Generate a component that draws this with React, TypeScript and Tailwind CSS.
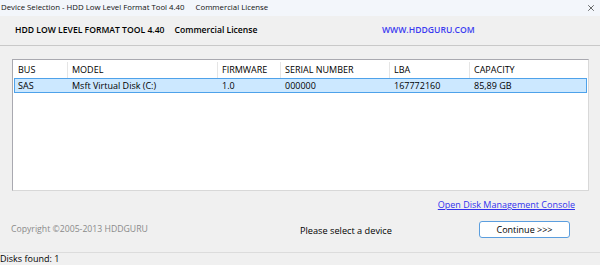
import { X } from "lucide-react"

const font = { fontFamily: '"Open Sans", "Noto Sans", sans-serif' }

const cols = [
  { key: "bus", label: "BUS", w: "w-[54px]" },
  { key: "model", label: "MODEL", w: "w-[150px]" },
  { key: "fw", label: "FIRMWARE", w: "w-[63px]" },
  { key: "sn", label: "SERIAL NUMBER", w: "w-[109px]" },
  { key: "lba", label: "LBA", w: "w-[80px]" },
  { key: "cap", label: "CAPACITY", w: "flex-1" },
]

const disks = [
  { bus: "SAS", model: "Msft Virtual Disk (C:)", fw: "1.0", sn: "000000", lba: "167772160", cap: "85,89 GB" },
]

export default function App() {
  return (
    <div className="w-[600px] h-[265px] bg-[#f0f0f0] text-black flex flex-col overflow-hidden text-[9px]" style={font}>
      {/* title bar */}
      <div className="h-[16px] bg-[#f3f6fb] flex items-center justify-between pl-[1px] pr-[4px] text-[7.8px] text-[#111]">
        <div className="flex">
          <span>Device Selection - HDD Low Level Format Tool 4.40</span>
          <span className="ml-[11px]">Commercial License</span>
        </div>
        <X className="w-[10px] h-[10px]" strokeWidth={1.5} />
      </div>

      {/* header */}
      <div className="h-[30px] flex items-center pl-[15px] border-b border-[#c9c9c9] text-[8.6px] font-semibold">
        <div className="flex w-[367px]">
          <span>HDD LOW LEVEL FORMAT TOOL 4.40</span>
          <span className="ml-[10px]">Commercial License</span>
        </div>
        <span className="text-[#3b3bf0]">WWW.HDDGURU.COM</span>
      </div>

      {/* device list */}
      <div className="mt-[13px] ml-[12px] w-[577px] h-[132px] bg-white border border-[#a9a9b0] border-r-[#d8d8d8] border-b-[#d8d8d8] p-[1px]">
        <div className="flex h-[17px] items-center pt-[1px]">
          {cols.map((c) => (
            <div key={c.key} className={`${c.w} h-full flex items-center pl-[4px] border-r border-[#e5e5e5] last:border-r-0`}>
              {c.label}
            </div>
          ))}
        </div>
        {disks.map((d) => (
          <div key={d.sn} className="flex h-[15px] items-center bg-[#cce8ff] border border-[#4ea2ea]">
            {cols.map((c) => (
              <div key={c.key} className={`${c.w} pl-[3px]`}>
                {d[c.key as keyof typeof d]}
              </div>
            ))}
          </div>
        ))}
      </div>

      {/* link */}
      <div className="h-[26px] flex items-center justify-end pr-[25px] mt-[1px]">
        <a className="text-[#3333ee] underline text-[9px]">Open Disk Management Console</a>
      </div>

      {/* footer actions */}
      <div className="h-[23px] flex items-center">
        <span className="text-[#8a8a8a] w-[300px] pl-[11px] text-[8.7px]">Copyright ©2005-2013 HDDGURU</span>
        <span className="w-[179px] text-[9.2px] pt-[2px]">Please select a device</span>
        <button className="w-[91px] h-[17px] bg-white border border-[#5b9ede] rounded-[3px] text-[9px] leading-none mb-[1px]">
          Continue &gt;&gt;&gt;
        </button>
      </div>

      {/* status bar */}
      <div className="mt-auto border-t border-[#dcdcdc] h-[13px] text-[9px] leading-[12px]">
        Disks found: 1
      </div>
    </div>
  )
}
